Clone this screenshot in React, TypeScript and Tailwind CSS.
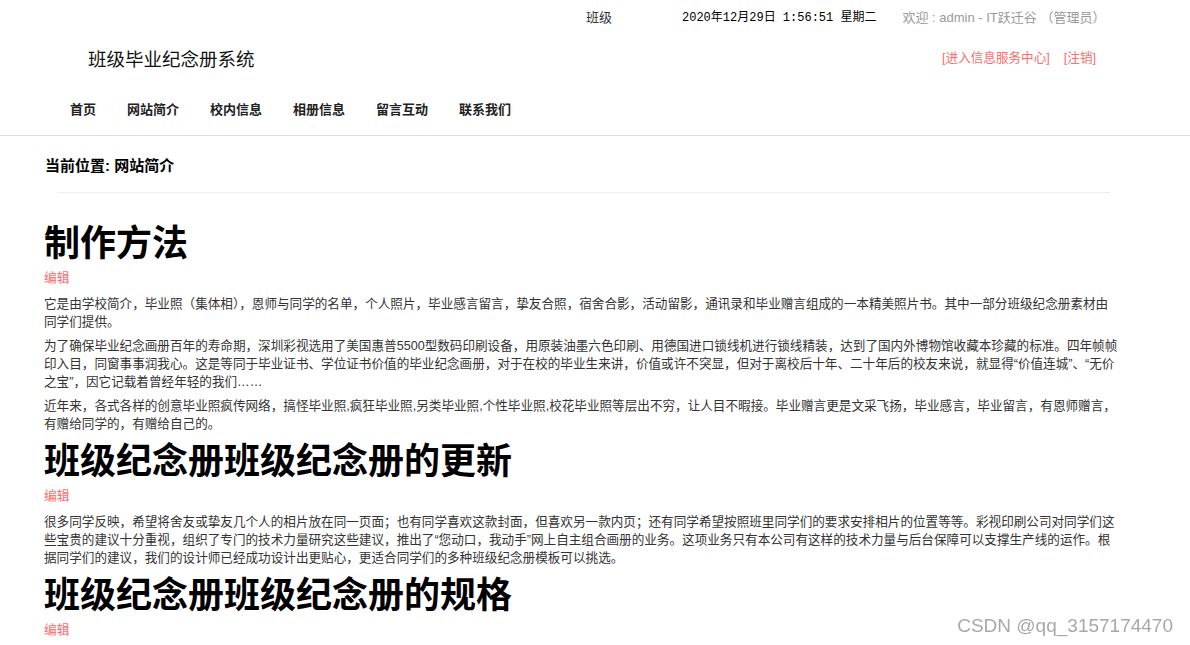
import React from 'react'

const navItems = ['首页', '网站简介', '校内信息', '相册信息', '留言互动', '联系我们']

type Section = {
  title: string
  paragraphs: string[]
}

const sections: Section[] = [
  {
    title: '制作方法',
    paragraphs: [
      '它是由学校简介，毕业照（集体相），恩师与同学的名单，个人照片，毕业感言留言，挚友合照，宿舍合影，活动留影，通讯录和毕业赠言组成的一本精美照片书。其中一部分班级纪念册素材由同学们提供。',
      '为了确保毕业纪念画册百年的寿命期，深圳彩视选用了美国惠普5500型数码印刷设备，用原装油墨六色印刷、用德国进口锁线机进行锁线精装，达到了国内外博物馆收藏本珍藏的标准。四年帧帧印入目，同窗事事润我心。这是等同于毕业证书、学位证书价值的毕业纪念画册，对于在校的毕业生来讲，价值或许不突显，但对于离校后十年、二十年后的校友来说，就显得“价值连城”、“无价之宝”，因它记载着曾经年轻的我们……',
      '近年来，各式各样的创意毕业照疯传网络，搞怪毕业照,疯狂毕业照,另类毕业照,个性毕业照,校花毕业照等层出不穷，让人目不暇接。毕业赠言更是文采飞扬，毕业感言，毕业留言，有恩师赠言，有赠给同学的，有赠给自己的。',
    ],
  },
  {
    title: '班级纪念册班级纪念册的更新',
    paragraphs: [
      '很多同学反映，希望将舍友或挚友几个人的相片放在同一页面；也有同学喜欢这款封面，但喜欢另一款内页；还有同学希望按照班里同学们的要求安排相片的位置等等。彩视印刷公司对同学们这些宝贵的建议十分重视，组织了专门的技术力量研究这些建议，推出了“您动口，我动手”网上自主组合画册的业务。这项业务只有本公司有这样的技术力量与后台保障可以支撑生产线的运作。根据同学们的建议，我们的设计师已经成功设计出更贴心，更适合同学们的多种班级纪念册模板可以挑选。',
    ],
  },
  {
    title: '班级纪念册班级纪念册的规格',
    paragraphs: [],
  },
]

export default function App() {
  return (
    <div className="min-h-screen bg-white font-['Liberation_Sans','Noto_Sans_CJK_SC',sans-serif] text-[#333]">
      <header className="border-b border-[#ddd]">
        <div className="flex h-[36px] items-center pl-[586px] text-[13px]">
          <span className="text-[#333]">班级</span>
          <span className="ml-[70px] font-['Liberation_Mono','Noto_Sans_CJK_SC',monospace] text-[12px] text-black">
            2020年12月29日 1:56:51 星期二
          </span>
          <span className="ml-[26px] text-[#999]">欢迎 : admin - IT跃迁谷 （管理员）</span>
        </div>

        <div className="flex h-[48px] items-center justify-between pl-[88px] pr-[94px]">
          <h1 className="text-[18.5px] text-[#111]">班级毕业纪念册系统</h1>
          <div className="-mt-[3px] flex gap-[14px] text-[12.6px] text-[#ff6c6c]">
            <a href="#">[进入信息服务中心]</a>
            <a href="#">[注销]</a>
          </div>
        </div>

        <nav className="flex h-[51px] items-center gap-[31px] pl-[70px]">
          {navItems.map((item) => (
            <a key={item} href="#" className="text-[13px] font-bold text-[#222]">
              {item}
            </a>
          ))}
        </nav>
      </header>

      <div className="pt-[20px]">
        <div className="pl-[45px] text-[15px] font-bold leading-[20px] text-black">当前位置: 网站简介</div>
        <div className="mt-[16px] ml-[57px] h-px w-[1053px] bg-[#eee]" />
      </div>

      <main className="mt-[31px] w-[1120px] pl-[44px]">
        {sections.map((section, index) => (
          <section key={section.title} className={index === 0 ? '' : 'mt-[9px]'}>
            <h2 className="text-[36px] font-bold leading-[40px] text-black">{section.title}</h2>
            <a href="#" className="mt-[5px] block text-[12.8px] leading-[18px] text-[#ff6c6c]">
              编辑
            </a>
            {section.paragraphs.length > 0 && (
              <div className="mt-[8px]">
                {section.paragraphs.map((text, i) => (
                  <p key={i} className="mb-[6px] text-[12.6px] leading-[18px] text-[#333]">
                    {text}
                  </p>
                ))}
              </div>
            )}
          </section>
        ))}
      </main>

      <div className="pointer-events-none fixed top-[612px] right-[17px] font-['Liberation_Sans',sans-serif] text-[19px] text-[#a8a8a8]">
        CSDN @qq_3157174470
      </div>
    </div>
  )
}
